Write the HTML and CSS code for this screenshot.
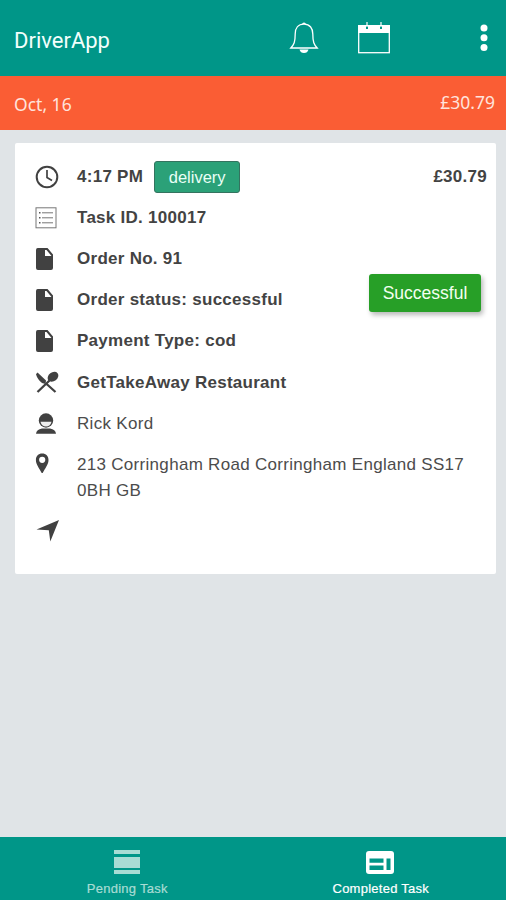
FILE: index.html
```html
<!DOCTYPE html>
<html lang="en">
<head>
<meta charset="utf-8">
<title>DriverApp</title>
<link rel="stylesheet" href="styles.css">
</head>
<body>
<svg class="defs" width="0" height="0" aria-hidden="true">
  <symbol id="doc" viewBox="0 0 24 24"><path fill-rule="evenodd" d="M2.800 1H12.500l5.500 6.500V21q0 2-2 2H3Q1 23 1 21V3Q1 1 2.800 1zM10 3v6h6.500l-5-6z"/></symbol>
</svg>
<div class="app">
  <header class="toolbar">
    <h1 class="title">DriverApp</h1>
    <svg class="bell" viewBox="0 0 30 32" width="30" height="32"><path d="M15 2.200C9 2.200 6.200 6.500 6.200 12c0 8-1.200 10.500-4.400 14h26.400c-3.200-3.500-4.400-6-4.400-14C23.800 6.500 21 2.200 15 2.200z" fill="none" stroke="#fff" stroke-width="1.300"/><path d="M13.200 2q0-1.500 1.800-1.500T16.800 2zM10.500 27.500h9q-1 3.500-4.500 3.500t-4.500-3.500z" fill="#fff"/></svg>
    <svg class="calendar" viewBox="0 0 32 32" width="32" height="32"><rect x=".7" y="3.700" width="30.600" height="27" fill="none" stroke="#fff" stroke-width="1.300"/><path d="M0 3h32v8H0z" fill="#fff"/><path d="M9 4v3M23 4v3" stroke="#009688" stroke-width="2"/><path d="M9 0v5M23 0v5" stroke="#fff" stroke-width="1.200"/></svg>
    <svg class="more" viewBox="0 0 8 28" width="8" height="28" fill="#fff"><circle cx="4" cy="4" r="3.500"/><circle cx="4" cy="13.700" r="3.500"/><circle cx="4" cy="23.400" r="3.500"/></svg>
  </header>
  <div class="daybar"><span class="day">Oct, 16</span><span class="total">£30.79</span></div>
  <main class="content">
    <section class="card">
      <div class="row bold">
        <svg class="icon" viewBox="0 0 24 24"><circle cx="12" cy="12" r="10.300" fill="none" stroke="#414141" stroke-width="2"/><path d="M12 5v7.500l5 3" fill="none" stroke="#414141" stroke-width="1.700"/></svg>
        <span class="time">4:17 PM</span><span class="tag">delivery</span><span class="price">£30.79</span>
      </div>
      <div class="row bold">
        <svg class="icon" viewBox="0 0 24 24"><rect x="1" y="1.800" width="20" height="20" fill="none" stroke="#777" stroke-width="1"/><path d="M7 6.800h11M7 11.800h11M7 16.800h11" stroke="#777" stroke-width="1"/><path d="M4 6.800h1.500M4 11.800h1.500M4 16.800h1.500" stroke="#555" stroke-width="1.500"/></svg>
        <span class="task">Task ID. 100017</span>
      </div>
      <div class="row bold"><svg class="icon"><use href="#doc"/></svg><span class="order">Order No. 91</span></div>
      <div class="row bold"><svg class="icon"><use href="#doc"/></svg><span class="status">Order status: successful</span></div>
      <div class="row bold"><svg class="icon"><use href="#doc"/></svg><span class="payment">Payment Type: cod</span></div>
      <div class="row bold">
        <svg class="icon" viewBox="0 0 24 24"><path d="M2.500 21L14.500 9.500M10.500 12L20.500 21" fill="none" stroke="#414141" stroke-width="2.300"/><path d="M1 3.200l1.500-1.700 8.500 8-.5 3.500L7 12Q2.500 8.500 1 3.200z"/><ellipse cx="18" cy="5.800" rx="5.800" ry="4.400" transform="rotate(-38 18 5.800)"/></svg>
        <span class="venue">GetTakeAway Restaurant</span>
      </div>
      <div class="row">
        <svg class="icon" viewBox="0 0 24 24"><circle cx="11" cy="8.500" r="7.200"/><path d="M5.500 9.800h11q-1 4.700-5.500 4.700t-5.500-4.700z" fill="#eee"/><path d="M1 21.800Q1.500 17.500 7 16.500h8q5.500 1 6 5.300z"/></svg>
        <span class="name">Rick Kord</span>
      </div>
      <div class="row address">
        <svg class="icon" viewBox="0 0 24 24"><path fill-rule="evenodd" d="M7.200 1.500C3.400 1.500.9 4.100.9 7.900c0 4.500 3.300 8 5.800 13.100h1c2.500-5.100 5.800-8.600 5.800-13.100 0-3.800-2.500-6.400-6.300-6.400zM7.200 4.700a3.100 3.100 0 100 6.200 3.100 3.100 0 000-6.200z"/></svg>
        <span class="street">213 Corringham Road Corringham England SS17 0BH GB</span>
      </div>
      <div class="row"><svg class="icon" viewBox="0 0 24 24"><path d="M1.500 9.500L24 0l-8.700 21.500-1.500-11.200z"/></svg></div>
      <button class="badge">Successful</button>
    </section>
  </main>
  <nav class="tabs">
    <div class="tab muted">
      <svg viewBox="0 0 28 26" width="28" height="26" fill="currentColor"><path d="M1 1h26v4H1zM1 8h26v11H1zM1 21h26v4H1z"/></svg>
      <span class="pending">Pending Task</span>
    </div>
    <div class="tab">
      <svg viewBox="0 0 28 26" width="28" height="26"><rect x="0" y="2" width="28" height="23" rx="3" fill="#fff"/><path d="M3.500 9.500h14v4.200h-14zM3.500 16.500h14V21h-14zM20.500 9.500h4V21h-4z" fill="#009688"/></svg>
      <span class="completed">Completed Task</span>
    </div>
  </nav>
</div>
</body>
</html>
```
FILE: styles.css
```css
* { box-sizing: border-box; }
body { margin: 0; font-family: "Liberation Sans", Arial, sans-serif; color: #414141; }
.defs { position: absolute; }
.app { height: 900px; display: flex; flex-direction: column; background: #e0e4e7; }
.toolbar { height: 76px; background: #009688; display: flex; align-items: center; padding: 0 18px 0 14px; }
.title { margin: 5px 0 0; width: 275px; font: 400 22px Roboto, sans-serif; color: #f2fffc; white-space: nowrap; }
.calendar { margin-left: 39px; }
.more { margin-left: auto; }
.daybar { height: 54px; background: #fa5d34; display: flex; justify-content: space-between; align-items: center; padding: 0 11px 2px 14px; color: #ffe3dc; font-family: "Noto Sans", sans-serif; font-size: 17.500px; }
.day { padding-top: 3px; }
.content { flex: 1; padding: 13px 10px 0 15px; }
.card { position: relative; height: 431px; background: #fff; border-radius: 2px; padding: 13px 9px 0 20px; }
.row { height: 41.200px; display: flex; align-items: center; font-size: 17px; letter-spacing: .3px; white-space: nowrap; color: #4c4c4c; }
.bold { font-weight: 700; letter-spacing: .27px; color: #434343; }
.icon { width: 24px; height: 24px; margin-right: 18px; flex: none; fill: #414141; }
.tag { margin-left: 11px; width: 86px; height: 32px; border: 1px solid #34735f; border-radius: 3px; background: #2ba178; color: #e9fff6; font-size: 16.500px; font-weight: 400; letter-spacing: 0; line-height: 31px; text-align: center; }
.price { margin-left: auto; }
.address { height: 67px; align-items: flex-start; padding-top: 8px; line-height: 26px; }
.street { width: 400px; white-space: normal; }
.badge { position: absolute; right: 15px; top: 131px; width: 112px; height: 38px; padding: 0; border: 0; border-radius: 3px; background: #279f27; color: #f3fff0; box-shadow: 2px 3px 5px rgba(0,0,0,.28); font: 17.500px "Liberation Sans", sans-serif; }
.tabs { height: 63px; background: #009688; display: flex; padding-left: 1px; }
.tab { flex: 1; display: flex; flex-direction: column; align-items: center; padding-top: 12px; color: #fff; font-size: 13px; }
.tab span { margin-top: 6px; line-height: 15px; letter-spacing: .25px; -webkit-text-stroke: .2px currentColor; }
.completed { padding-left: 2px; }
.muted { color: #a8dcd4; }
```
